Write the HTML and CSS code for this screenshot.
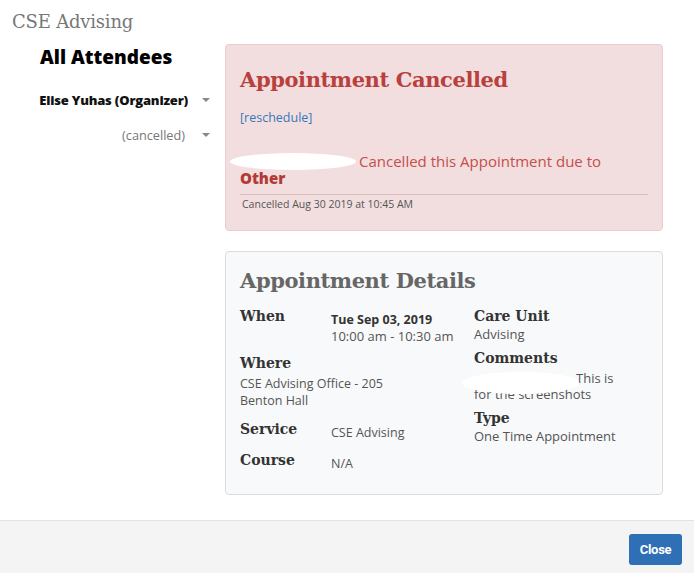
FILE: index.html
```html
<!DOCTYPE html>
<html>
<head>
<meta charset="utf-8">
<link rel="stylesheet" href="styles.css">
</head>
<body>
<div class="page">
  <div class="header"><h1 class="title">CSE Advising</h1></div>
  <div class="main">
    <div class="left">
      <h2 class="attendees">All Attendees</h2>
      <div class="attendee first">
        <span class="att-name strong">Elise Yuhas (Organizer)</span>
        <span class="caret"></span>
      </div>
      <div class="attendee">
        <span class="att-name muted">(cancelled)</span>
        <span class="caret"></span>
      </div>
    </div>
    <div class="right">
      <div class="card cancelled">
        <h2 class="card-title red">Appointment Cancelled</h2>
        <a class="resched" href="#">[reschedule]</a>
        <p class="reason"><span class="blob blob-name"></span>Cancelled this Appointment due to<br><b class="other">Other</b></p>
        <div class="stamp">Cancelled Aug 30 2019 at 10:45 AM</div>
      </div>
      <div class="card details">
        <h2 class="card-title grey">Appointment Details</h2>
        <div class="cols">
          <div class="col col-l">
            <div class="pair">
              <div class="lbl">When</div>
              <div class="val"><b class="date">Tue Sep 03, 2019</b><br>10:00 am - 10:30 am</div>
            </div>
            <div class="stack">
              <div class="lbl">Where</div>
              <div class="val small">CSE Advising Office - 205<br>Benton Hall</div>
            </div>
            <div class="pair p-service">
              <div class="lbl">Service</div>
              <div class="val small lowered">CSE Advising</div>
            </div>
            <div class="pair p-course">
              <div class="lbl">Course</div>
              <div class="val small lowered">N/A</div>
            </div>
          </div>
          <div class="col col-r">
            <div class="lbl">Care Unit</div>
            <div class="val">Advising</div>
            <div class="lbl gap">Comments</div>
            <div class="val comment"><span class="blob blob-comment"></span><span class="indent"></span>This is<br>for the screenshots</div>
            <div class="lbl gap">Type</div>
            <div class="val">One Time Appointment</div>
          </div>
        </div>
      </div>
    </div>
  </div>
  <div class="footer"><button class="close">Close</button></div>
</div>
</body>
</html>
```
FILE: styles.css
```css
html, body { margin: 0; padding: 0; background: #fff; }
body { font-family: "Open Sans", "DejaVu Sans", sans-serif; color: #333; }
.page { width: 694px; height: 573px; display: flex; flex-direction: column; overflow: hidden; }
.header { padding: 10px 12px 0; height: 34px; box-sizing: border-box; }
.title { margin: 0; font-family: "DejaVu Serif", serif; font-weight: normal; font-size: 18px; color: #777; line-height: 24px; letter-spacing: -0.2px; }
.main { flex: 1; display: flex; }
.left { width: 185px; padding-left: 40px; }
.attendees { margin: 10px 0 0; font-size: 19px; font-weight: 800; color: #000; line-height: 26px; white-space: nowrap; }
.attendee { display: flex; align-items: center; justify-content: flex-end; height: 35px; width: 170px; font-size: 13px; white-space: nowrap; }
.attendee.first { margin-top: 12px; }
.att-name.strong { font-weight: 800; color: #111; letter-spacing: -0.2px; }
.att-name.muted { color: #777; margin-right: 3px; font-size: 12.7px; }
.caret { width: 0; height: 0; border-left: 4px solid transparent; border-right: 4px solid transparent; border-top: 4px solid #888; margin-left: 14px; flex: none; }
.right { width: 438px; padding-top: 10px; }
.card { border-radius: 4px; box-sizing: border-box; }
.cancelled { background: #f2dede; border: 1px solid #ebccd1; padding: 20px 14px 20px 14px; height: 187px; }
.card-title { margin: 0; font-family: "DejaVu Serif", serif; font-weight: bold; font-size: 21px; line-height: 30px; letter-spacing: -0.4px; }
.red { color: #b8403d; }
.grey { color: #666; }
.resched { display: block; margin-top: 14px; color: #337ab7; text-decoration: none; font-size: 12.5px; line-height: 18px; }
.reason { margin: 26px 0 0; color: #c44f4b; font-size: 15px; line-height: 16px; padding-bottom: 8px; border-bottom: 1px solid #d8bcbc; }
.other { color: #b23b38; font-weight: 800; }
.blob { display: inline-block; background: #fff; border-radius: 50%; }
.blob-name { width: 126px; height: 17px; margin-left: -10px; margin-right: 3px; vertical-align: -3px; }
.stamp { font-size: 10.5px; color: #555; margin-top: 2px; padding-left: 2px; line-height: 14px; }
.details { margin-top: 20px; background: #f8f9fa; border: 1px solid #dcdcdc; padding: 14px 14px 20px; height: 244px; }
.cols { display: flex; margin-top: 10px; }
.col-l { width: 234px; }
.col-r { flex: 1; }
.lbl { font-family: "DejaVu Serif", serif; font-weight: bold; font-size: 14px; color: #333; line-height: 20px; }
.val { font-size: 13px; color: #555; line-height: 16px; }
.val.small { font-size: 12.5px; }
.date { color: #333; font-size: 12.5px; }
.pair { display: flex; }
.pair .lbl { width: 91px; flex: none; }
.pair .val { padding-top: 5px; }
.stack { margin-top: 9px; }
.stack .val { margin-top: 2px; line-height: 17px; }
.p-service { margin-top: 10px; }
.p-course { margin-top: 9px; }
.pair .lowered { padding-top: 6px; }
.gap { margin-top: 6px; }
.comment { position: relative; margin-top: 2px; }
.indent { display: inline-block; width: 102px; }
.blob-comment { position: absolute; left: -12px; top: 2px; width: 117px; height: 22px; }
.footer { height: 53px; border-top: 1px solid #e3e3e3; background: #f4f4f4; display: flex; justify-content: flex-end; align-items: flex-start; padding: 13px 12px 0; box-sizing: border-box; }
.close { background: #2e6fb6; color: #fff; border: none; border-radius: 3px; width: 53px; height: 31px; font-family: "Roboto", sans-serif; font-weight: 700; font-size: 13px; letter-spacing: -0.3px; padding: 0; }
```
